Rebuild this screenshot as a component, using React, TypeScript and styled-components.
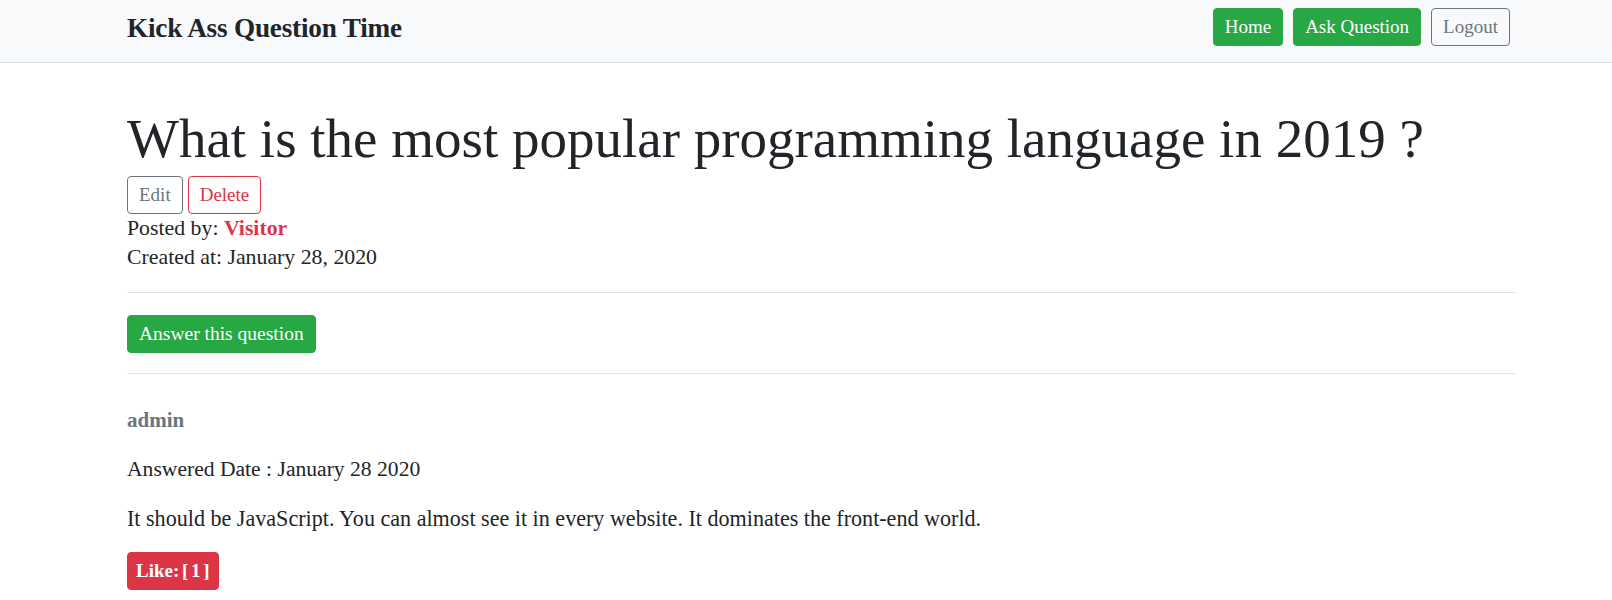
import React from "react";
import styled, { createGlobalStyle, css } from "styled-components";

const GlobalStyle = createGlobalStyle`
  html, body { margin: 0; padding: 0; background: #fff; }
  body {
    font-family: "Liberation Serif", "Times New Roman", serif;
    color: #212529;
    font-size: 21.8px;
    line-height: 1.35;
  }
  * { box-sizing: border-box; }
`;

const NavBar = styled.nav`
  height: 63px;
  background: #f8f9fa;
  border-bottom: 1px solid #dee2e6;
  display: flex;
  justify-content: space-between;
  align-items: flex-start;
  padding: 8px 102px 0 127px;
`;

const Brand = styled.a`
  font-size: 27.2px;
  font-weight: 700;
  color: #212529;
  text-decoration: none;
  line-height: 40px;
  letter-spacing: -0.2px;
`;

const NavLinks = styled.div`
  display: flex;
  gap: 10px;
`;

type Variant = "success" | "danger" | "outlineSecondary" | "outlineDanger";

const variants: Record<Variant, ReturnType<typeof css>> = {
  success: css`
    background: #28a745;
    border-color: #28a745;
    color: #fff;
  `,
  danger: css`
    background: #dc3545;
    border-color: #dc3545;
    color: #fff;
    font-weight: 700;
    word-spacing: -2px;
    padding: 0 8px;
  `,
  outlineSecondary: css`
    background: transparent;
    border-color: #6c757d;
    color: #6c757d;
  `,
  outlineDanger: css`
    background: transparent;
    border-color: #dc3545;
    color: #dc3545;
  `,
};

const Button = styled.button<{ $variant: Variant; $size?: number }>`
  font-family: inherit;
  font-size: ${(p) => p.$size ?? 19}px;
  height: 38px;
  padding: 0 11px;
  border: 1px solid transparent;
  border-radius: 4px;
  line-height: 36px;
  cursor: pointer;
  ${(p) => variants[p.$variant]}
`;

const Main = styled.main`
  padding: 0 97px 0 127px;
`;

const Title = styled.h1`
  margin: 0;
  padding-top: 41px;
  font-size: 55px;
  font-weight: 400;
  line-height: 70px;
  color: #212529;
`;

const ActionRow = styled.div`
  display: flex;
  gap: 5px;
  margin-top: 2px;
`;

const Meta = styled.div`
  line-height: 29px;
`;

const Author = styled.span`
  color: #dc3545;
  font-weight: 700;
`;

const Divider = styled.hr<{ $gap?: number }>`
  margin: ${(p) => p.$gap ?? 0}px 0 0;
  border: 0;
  border-top: 1px solid #e3e3e3;
`;

const AnswerSection = styled.div`
  padding: 22px 0 20px;
`;

const Answer = styled.div`
  padding-top: 32px;
`;

const AnswerBy = styled.div`
  color: #6c757d;
  font-weight: 700;
  font-size: 21px;
  line-height: 29px;
`;

const Para = styled.p<{ $size?: number }>`
  margin: 20px 0 0;
  line-height: 29px;
  font-size: ${(p) => p.$size ?? 21.8}px;
`;

const LikeRow = styled.div`
  margin-top: 19px;
`;

export default function App() {
  return (
    <>
      <GlobalStyle />
      <NavBar>
        <Brand href="#">Kick Ass Question Time</Brand>
        <NavLinks>
          <Button $variant="success">Home</Button>
          <Button $variant="success">Ask Question</Button>
          <Button $variant="outlineSecondary">Logout</Button>
        </NavLinks>
      </NavBar>
      <Main>
        <Title>What is the most popular programming language in 2019 ?</Title>
        <ActionRow>
          <Button $variant="outlineSecondary">Edit</Button>
          <Button $variant="outlineDanger">Delete</Button>
        </ActionRow>
        <Meta>
          Posted by: <Author>Visitor</Author>
        </Meta>
        <Meta>Created at: January 28, 2020</Meta>
        <Divider $gap={20} />
        <AnswerSection>
          <Button $variant="success" $size={19.5}>
            Answer this question
          </Button>
        </AnswerSection>
        <Divider />
        <Answer>
          <AnswerBy>admin</AnswerBy>
          <Para $size={21.6}>Answered Date : January 28 2020</Para>
          <Para $size={22.1}>
            It should be JavaScript. You can almost see it in every website. It
            dominates the front-end world.
          </Para>
          <LikeRow>
            <Button $variant="danger">Like: [ 1 ]</Button>
          </LikeRow>
        </Answer>
      </Main>
    </>
  );
}
